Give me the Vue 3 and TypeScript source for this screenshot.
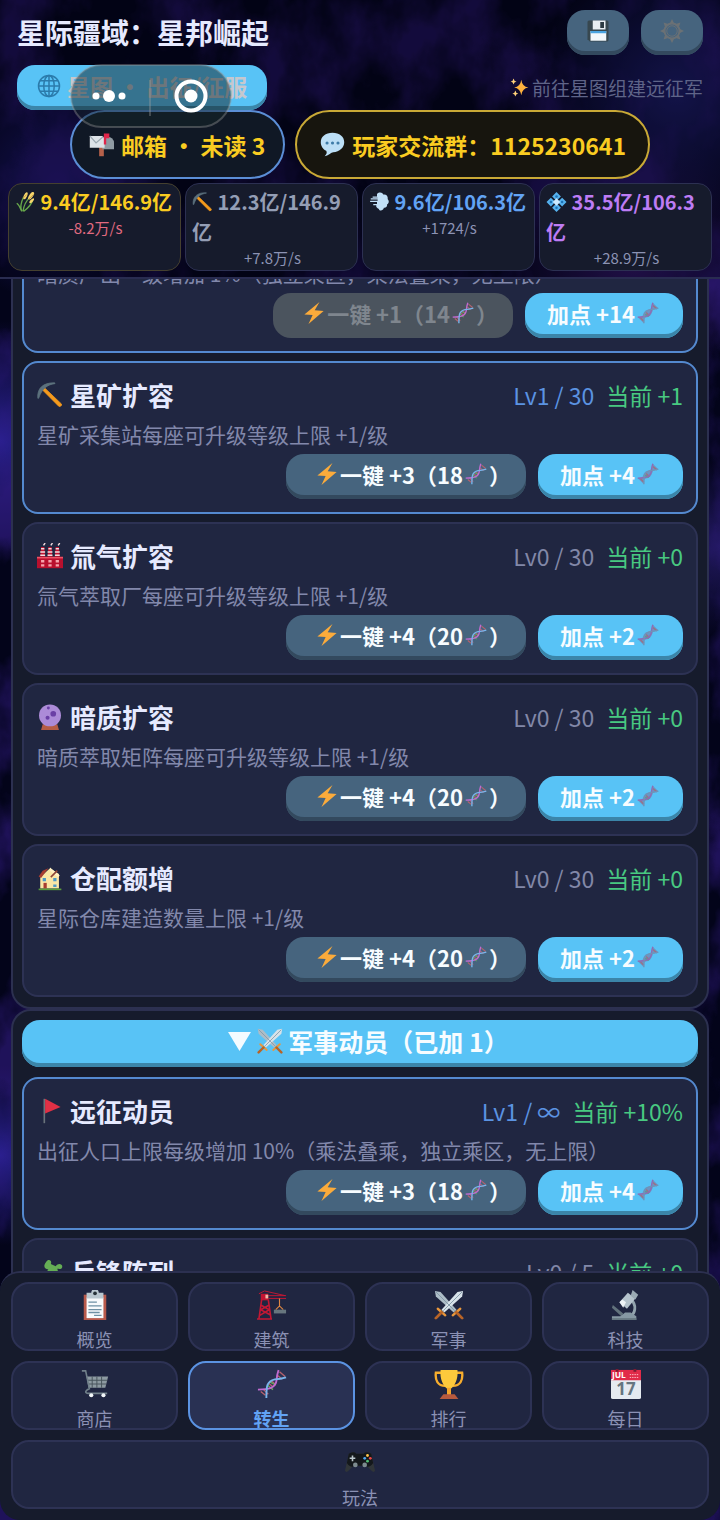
<script setup lang="ts">
import { onMounted, ref } from 'vue'

interface Talent {
  icon: string
  name: string
  level: string
  cap: string
  current: string
  desc: string
  bulk: string
  bulkCost: string
  single: string
  active?: boolean
  locked?: boolean
}

const stats = [
  { icon: 'wheat', value: '9.4亿/146.9亿', rate: '-8.2万/s', tone: 'gold' },
  { icon: 'pick', value: '12.3亿/146.9亿', rate: '+7.8万/s', tone: 'grey' },
  { icon: 'wind', value: '9.6亿/106.3亿', rate: '+1724/s', tone: 'blue' },
  { icon: 'diamond', value: '35.5亿/106.3亿', rate: '+28.9万/s', tone: 'violet' },
]

const resources: Talent[] = [
  { icon: 'diamond', name: '暗质增产', level: 'Lv1', cap: '∞', current: '+1%', desc: '暗质产出一级增加 1%（独立乘区，乘法叠乘，无上限）', bulk: '+1', bulkCost: '14', single: '+14', active: true, locked: true },
  { icon: 'pick', name: '星矿扩容', level: 'Lv1', cap: '30', current: '+1', desc: '星矿采集站每座可升级等级上限 +1/级', bulk: '+3', bulkCost: '18', single: '+4', active: true },
  { icon: 'factory', name: '氚气扩容', level: 'Lv0', cap: '30', current: '+0', desc: '氚气萃取厂每座可升级等级上限 +1/级', bulk: '+4', bulkCost: '20', single: '+2' },
  { icon: 'orb', name: '暗质扩容', level: 'Lv0', cap: '30', current: '+0', desc: '暗质萃取矩阵每座可升级等级上限 +1/级', bulk: '+4', bulkCost: '20', single: '+2' },
  { icon: 'house', name: '仓配额增', level: 'Lv0', cap: '30', current: '+0', desc: '星际仓库建造数量上限 +1/级', bulk: '+4', bulkCost: '20', single: '+2' },
]

const military: Talent[] = [
  { icon: 'flag', name: '远征动员', level: 'Lv1', cap: '∞', current: '+10%', desc: '出征人口上限每级增加 10%（乘法叠乘，独立乘区，无上限）', bulk: '+3', bulkCost: '18', single: '+4', active: true },
  { icon: 'puzzle', name: '兵锋阵列', level: 'Lv0', cap: '5', current: '+0', desc: '出征队列数量上限 +1/级', bulk: '+4', bulkCost: '20', single: '+2' },
]

const groups = [
  { id: 'resource', title: '', talents: resources },
  { id: 'military', title: '军事动员（已加 1）', talents: military },
]

const tabs = [
  { icon: 'clipboard', label: '概览' },
  { icon: 'crane', label: '建筑' },
  { icon: 'swords', label: '军事' },
  { icon: 'microscope', label: '科技' },
  { icon: 'cart', label: '商店' },
  { icon: 'dna', label: '转生' },
  { icon: 'trophy', label: '排行' },
  { icon: 'calendar', label: '每日' },
  { icon: 'gamepad', label: '玩法' },
]

const activeTab = ref('转生')
const list = ref<HTMLElement | null>(null)

onMounted(() => {
  const box = list.value
  const card = box?.querySelectorAll<HTMLElement>('.talent')[1]
  if (box && card) {
    box.scrollTop += card.getBoundingClientRect().top - box.getBoundingClientRect().top - 82
  }
})
</script>

<template>
  <div class="app">
    <svg class="sprites" aria-hidden="true">
      <symbol id="i-disk" viewBox="0 0 32 32">
        <path d="M4 2h24a2 2 0 0 1 2 2v24a2 2 0 0 1-2 2H5l-3-3V4a2 2 0 0 1 2-2z" fill="#37474f" />
        <path d="M9 2h17v12H9z" fill="#e8eef2" /><path d="M19 4h5v8h-5z" fill="#2c3a42" />
        <path d="M6 16h21v13H6z" fill="#f2f7fb" /><path d="M6 16h21v3H6z" fill="#4aa3e0" />
      </symbol>
      <symbol id="i-gear" viewBox="0 0 32 32">
        <g fill="none" stroke="#6b7175" stroke-width="2.6">
          <circle cx="16" cy="16" r="10" /><circle cx="16" cy="16" r="7" stroke-width="1.2" />
        </g>
        <path d="m16 0 3 6h-6zM16 32l3-6h-6zM0 16l6-3v6zM32 16l-6-3v6zM4.700 4.700l6.300 2.100-4.200 4.200zM27.300 4.700l-6.300 2.100 4.200 4.200zM4.700 27.300l6.300-2.100-4.200-4.200zM27.300 27.300l-6.300-2.100 4.200-4.200z" fill="#6b7175" />
      </symbol>
      <symbol id="i-globe" viewBox="0 0 32 32">
        <g fill="none" stroke="#2b7bab" stroke-width="2">
          <circle cx="16" cy="16" r="14" /><ellipse cx="16" cy="16" rx="7" ry="14" />
          <path d="M16 2v28M2 16h28M4 9h24M4 23h24" />
        </g>
      </symbol>
      <symbol id="i-sparkle" viewBox="0 0 32 32">
        <path d="M19 3q1.500 11.500 12 13q-10.500 1.500-12 13q-1.500-11.500-12-13q10.500-1.500 12-13z" fill="#fdb13e" />
        <path d="M6 1q.6 4.400 5 5q-4.400.6-5 5q-.6-4.400-5-5q4.400-.6 5-5zM9 21q.6 4.400 5 5q-4.400.6-5 5q-.6-4.400-5-5q4.400-.6 5-5z" fill="#ffd27a" />
      </symbol>
      <symbol id="i-mail" viewBox="0 0 32 32">
        <path d="M13 18h6v13h-6z" fill="#b5604a" />
        <path d="M18 6h6a8 8 0 0 1 8 8v8H17z" fill="#8f9ba3" />
        <path d="M1 5h16l3 4v11H1z" fill="#dde3e8" /><path d="m1 5 8 9 9-8" fill="none" stroke="#9ba8b0" stroke-width="1.500" />
        <path d="M19 2h7v6h-4v8h-3z" fill="#e0254a" />
      </symbol>
      <symbol id="i-chat" viewBox="0 0 32 32">
        <path d="M16 1c9 0 15 5 15 12s-6 12-14 13c-3 0-5 4-11 5 3-3 3-5 2-7-4-2-7-6-7-11C1 6 7 1 16 1z" fill="#bcdff6" />
        <g fill="#3e7ca8"><circle cx="9" cy="14" r="2" /><circle cx="16" cy="14" r="2" /><circle cx="23" cy="14" r="2" /></g>
      </symbol>
      <symbol id="i-wheat" viewBox="0 0 32 32">
        <g fill="none" stroke="#67a84b" stroke-width="2.200"><path d="M12 31C13 22 16 15 24 7M10 31C7 24 9 16 13 8M13 31C18 27 25 22 27 14M9 29C7 24 5 20 2 18" /></g>
        <g fill="#f6d56c"><ellipse cx="16" cy="6" rx="2.500" ry="6" transform="rotate(25 16 6)" /><ellipse cx="25" cy="6" rx="3" ry="7" transform="rotate(35 25 6)" /><ellipse cx="26" cy="14" rx="2" ry="5" transform="rotate(45 26 14)" /></g>
        <path d="m12 10 6-6M21 12l8-8" stroke="#a8842a" />
      </symbol>
      <symbol id="i-pick" viewBox="0 0 32 32">
        <path d="m8 6 22 21q1 3-3 3L6 9z" fill="#f59a1c" stroke="#f59a1c" />
        <path d="M1 20C0 8 7 1 21 1q2 0 1 1C13 3 6 8 2 20z" fill="#5c717d" stroke="#5c717d" />
      </symbol>
      <symbol id="i-wind" viewBox="0 0 32 32">
        <path d="M12 3c4-4 9-2 10 1 5-1 8 3 7 7 3 3 2 8-1 9 1 4-3 6-5 5-1 5-7 6-8 2-4-1-5-4-4-6H6v-2h6v-3H1v-2h12v-2H2v-2h11V9H5V7h7z" fill="#c2e0f8" />
      </symbol>
      <symbol id="i-diamond" viewBox="0 0 32 32">
        <g fill="#55b1ee"><path d="m16 0 7 7-7 7-7-7zM16 18l7 7-7 7-7-7zM7 9l7 7-7 7-7-7zM25 9l7 7-7 7-7-7z" /></g>
        <path d="m16 10 6 6-6 6-6-6z" fill="#cbeaff" />
        <g fill="#1d72b4"><circle cx="16" cy="7" r="2" /><circle cx="16" cy="25" r="2" /><circle cx="7" cy="16" r="2" /><circle cx="25" cy="16" r="2" /></g>
      </symbol>
      <symbol id="i-bolt" viewBox="0 0 32 32"><path d="M24 0 2 18l12 1L8 32 30 13l-13-1z" fill="#fbab3b" /></symbol>
      <symbol id="i-dna" viewBox="0 0 32 32">
        <g fill="none" stroke-width="1.500">
          <path d="m4 24 5 4M7 22l5 5M12 15l5 4M15 12l5 5M22 7l5 4M24 3l6 5" stroke="#b5616d" />
          <path d="m11 17 6 5M14 14l6 3" stroke="#63a95b" />
          <path d="M1 22C12 22 20 21 21 11c0-4 1-7 2-10" stroke="#c06bd0" stroke-width="2" />
          <path d="M10 31c0-12 0-18 9-20 5 0 9-1 12-2" stroke="#79b5ec" stroke-width="2" />
        </g>
      </symbol>
      <symbol id="i-dna-soft" viewBox="0 0 32 32">
        <path d="m1 22 9 9C9 23 12 22 15 22 22 21 22 12 24 11L31 9 23 1C22 6 22 10 17 11 10 12 9 18 8 21z" fill="#7187b3" opacity=".75" />
        <g fill="none" stroke-width="2">
          <path d="m5 23 5 5M13 15l5 5M23 5l6 5" stroke="#9b7186" /><path d="m12 18 5 3" stroke="#5d9c83" />
          <path d="M1 22C12 22 20 21 21 11c0-4 1-7 2-10" stroke="#8f6bb5" /><path d="M10 31c0-12 0-18 9-20 5 0 9-1 12-2" stroke="#6f93b8" />
        </g>
      </symbol>
      <symbol id="i-factory" viewBox="0 0 32 32">
        <path d="M0 17h32v14H0z" fill="#b8102e" /><path d="M0 17h32v2H0z" fill="#ee5265" />
        <path d="M5 5h4l1 12H4zM14 5h4l1 12h-6zM23 5h4l1 12h-6z" fill="#c31432" />
        <path d="M5 7h4M4 11h6M4 15h6M14 7h4M13 11h6M13 15h6M23 7h4M22 11h6M22 15h6M8 3l2-3M17 3l2-3M26 3l2-3" stroke="#f3dde0" stroke-width="1.700" />
        <path d="M5 21h4v3H5zM14 21h4v3h-4zM23 21h4v3h-4zM5 26h4v3H5zM14 26h4v3h-4zM23 26h4v3h-4z" fill="#f5a3ac" />
      </symbol>
      <symbol id="i-orb" viewBox="0 0 32 32">
        <path d="M7 25h18l2 7H5z" fill="#b65c45" /><circle cx="16" cy="14" r="13.500" fill="#ac8bd8" />
        <g fill="#6a3fa5"><circle cx="20" cy="12" r="3.500" /><circle cx="13" cy="17" r="2.500" /><circle cx="14" cy="5" r="1.800" /></g>
      </symbol>
      <symbol id="i-house" viewBox="0 0 32 32">
        <path d="M4 15 16 4l11 7v18H4z" fill="#fae6a6" /><path d="M2 14 7 7l7-3-9 12z" fill="#a73d31" />
        <path d="m16 3 12 10-2 2-10-8z" fill="#fff1c4" /><path d="m17 15 8-8" stroke="#8e4437" stroke-width="2" />
        <path d="M7 16h4v4H7zM20 16h4v4h-4zM20 24h4v3h-4z" fill="#4f99c4" /><path d="M8 22h4v7H8z" fill="#a73d31" /><path d="M2 29h28v2H2z" fill="#5c9e3f" />
      </symbol>
      <symbol id="i-flag" viewBox="0 0 32 32"><path d="M8 1h2v30H8z" fill="#69737b" /><path d="M10 1 29 11 10 19z" fill="#e13045" /></symbol>
      <symbol id="i-puzzle" viewBox="0 0 32 32"><path d="M11 4c3-5 8-2 6 2l6 3c3-5 9-3 8 1-1 3-4 2-6 2l2 8c-5 0-6 5-2 6l-5 5H4l4-8c-6 2-9-2-6-5 2-3 6-1 7 1l5-6c-6-1-6-5-3-9z" fill="#65ae55" /></symbol>
      <symbol id="i-swords" viewBox="0 0 32 32">
        <path d="m1 1 6 1 17 19-3 3L2 7z" fill="#adbdc7" /><path d="m31 1-6 1L8 21l3 3L30 7z" fill="#d7e2e9" />
        <path d="m2 2 20 20M30 2 10 22" stroke="#8298a6" />
        <path d="m4 20 8 7M28 20l-8 7" stroke="#e9973c" stroke-width="2.500" stroke-linecap="round" />
        <path d="m8 24-6 6M24 24l6 6" stroke="#b86427" stroke-width="3" stroke-linecap="round" />
      </symbol>
      <symbol id="i-clipboard" viewBox="0 0 32 32">
        <path d="M4 5h24v27H4z" fill="#b7594b" /><path d="M7 8h18v22H7z" fill="#f7fafc" />
        <path d="M12 3a4 4 0 0 1 8 0h5v6H7V3z" fill="#b9c7cf" /><circle cx="16" cy="3.500" r="2" fill="#263238" />
        <path d="M9 13h9M9 17h14M9 21h14M9 24h12M15 27h8" stroke="#6d90a4" stroke-width="1.400" />
      </symbol>
      <symbol id="i-crane" viewBox="0 0 32 32">
        <g fill="none" stroke="#c31834" stroke-width="1.700">
          <path d="M5 10 2 31M12 10l3 21M0 31h16M4 16l9 5-10 6M13 16l-9 5 11 6" />
          <path d="M12 6h19M12 9h19M2 4l6-3 22 5" stroke-width="1" />
        </g>
        <path d="M4 4h8v7H4z" fill="#c31432" /><path d="M9 5h3v4H9z" fill="#f1b9a7" />
        <path d="M24 9v9M20 21l4-4 4 4" fill="none" stroke="#df8742" stroke-width="1.200" /><path d="M18 21h13v4H18z" fill="#67767e" />
      </symbol>
      <symbol id="i-microscope" viewBox="0 0 32 32">
        <path d="M21 10c7 6 5 15-1 19" fill="none" stroke="#93a4ae" stroke-width="3" />
        <path d="m18 3 8 6-9 11-8-7z" fill="#b5c3cc" /><path d="m12 10 4 3-3 6-4-6z" fill="#eef3f6" />
        <path d="m23 0 6 5-3 5-5-4z" fill="#9babb5" /><path d="m2 16 11 9-2 3L1 19z" fill="#62727c" />
        <path d="M1 28h9l5-4h6l6 4v4H1z" fill="#8698a3" /><path d="M1 30h26v2H1z" fill="#667781" />
      </symbol>
      <symbol id="i-cart" viewBox="0 0 32 32">
        <path d="M7 8h23l-3 12H9z" fill="#8d9aa1" /><path d="M8 12h21M9 16h19M13 8v12M18 8v12M23 8v12" stroke="#46525a" />
        <path d="M2 2h4l4 19c-5 2-5 5-1 5h20" fill="none" stroke="#71808a" stroke-width="1.700" />
        <circle cx="12" cy="28" r="2.200" fill="#f2f6f8" /><circle cx="25" cy="28" r="2.200" fill="#f2f6f8" />
      </symbol>
      <symbol id="i-trophy" viewBox="0 0 32 32">
        <path d="M8 4H2c-1 8 2 14 10 14M24 4h6c1 8-2 14-10 14" fill="none" stroke="#f7ad2d" stroke-width="2.500" />
        <path d="M7 1h18c1 10-3 17-7 20v6h-4v-6C10 18 6 11 7 1z" fill="#fdc93c" /><path d="M14 20h4v8h-4z" fill="#f4a42b" /><path d="M10 27h12l4 5H6z" fill="#b75a3e" />
      </symbol>
      <symbol id="i-calendar" viewBox="0 0 32 32">
        <rect x="0" y="1" width="32" height="31" rx="2" fill="#e5eaf0" /><path d="M0 1h32v11H0z" fill="#e12b49" />
        <path d="M5 0h3v3H5zM24 0h3v3h-3z" fill="#7b1c32" />
        <path d="M20 6h10M20 9h10" stroke="#ffc4cc" stroke-dasharray="1.500 1" />
        <text x="1" y="10" class="cal-month">JUL</text><text x="16" y="28" text-anchor="middle" class="cal-day">17</text>
      </symbol>
      <symbol id="i-gamepad" viewBox="0 0 32 32">
        <path d="M4 6q6-3 8 0h8q2-3 8 0l4 18q-1 3-4 0l-5-5H9l-5 5q-3 3-4 0z" fill="#303538" />
        <path d="M4 6q6-3 8 0h8q2-3 8 0l2 10q-4 6-9 3H11q-5 3-9-3z" fill="#14181b" />
        <path d="M8 8v6M5 11h6" stroke="#bbc6cb" stroke-width="1.700" /><circle cx="11" cy="18" r="2.500" fill="#7d8b8f" /><circle cx="21" cy="18" r="2.500" fill="#7d8b8f" />
        <circle cx="24" cy="8" r="1.500" fill="#ffc44c" /><circle cx="21" cy="11" r="1.500" fill="#4da7f4" /><circle cx="27" cy="11" r="1.500" fill="#e84646" /><circle cx="24" cy="14" r="1.500" fill="#51ba74" />
      </symbol>
    </svg>

    <svg class="nebula" aria-hidden="true">
      <filter id="clouds" x="0" y="0" width="100%" height="100%" color-interpolation-filters="sRGB">
        <feTurbulence type="fractalNoise" baseFrequency="0.014 0.009" numOctaves="5" seed="11" />
        <feColorMatrix values="0 0 0 0 0.2  0 0 0 0 0.11  0 0 0 0 0.52  3.2 0.8 0 0 -1.75" />
      </filter>
      <rect width="100%" height="100%" filter="url(#clouds)" />
    </svg>

    <header class="top">
      <div class="bar">
        <h1>星际疆域：星邦崛起</h1>
        <div class="tools">
          <button class="btn dim tool" type="button" aria-label="保存"><svg><use href="#i-disk" /></svg></button>
          <button class="btn dim tool" type="button" aria-label="设置"><svg><use href="#i-gear" /></svg></button>
        </div>
      </div>
      <div class="bar second">
        <button class="btn starmap" type="button"><svg><use href="#i-globe" /></svg>星图 · 出征/征服</button>
        <p class="hint"><svg><use href="#i-sparkle" /></svg>前往星图组建远征军</p>
      </div>
      <div class="pills">
        <button class="pill mail" type="button"><svg><use href="#i-mail" /></svg>邮箱 · 未读 3</button>
        <button class="pill group" type="button"><svg><use href="#i-chat" /></svg>玩家交流群：1125230641</button>
      </div>
      <ul class="stats">
        <li v-for="s in stats" :key="s.icon" :class="s.tone">
          <div class="amount"><svg><use :href="'#i-' + s.icon" /></svg>{{ ' ' + s.value }}</div>
          <div class="rate">{{ s.rate }}</div>
        </li>
      </ul>
      <svg class="capsule" viewBox="0 0 162 64" aria-hidden="true">
        <rect x="1" y="1" width="160" height="62" rx="31" fill="rgba(20,35,40,.5)" stroke="rgba(150,150,150,.4)" stroke-width="2" />
        <circle cx="26" cy="32" r="3.500" fill="#fff" /><circle cx="39" cy="32" r="6" fill="#fff" /><circle cx="52" cy="32" r="3.500" fill="#fff" />
        <path d="M80 16v36" stroke="rgba(160,160,160,.35)" stroke-width="2" />
        <circle cx="121" cy="32" r="14.500" fill="none" stroke="#fff" stroke-width="4" /><circle cx="121" cy="32" r="6.500" fill="#fff" />
      </svg>
    </header>

    <main ref="list" class="list">
      <section v-for="g in groups" :key="g.id" class="panel">
        <button v-if="g.title" class="btn fold" type="button">
          <svg class="tri" viewBox="0 0 24 22"><path d="M0 1h24L12 21z" fill="#f4fbff" /></svg>
          <svg><use href="#i-swords" /></svg>{{ g.title }}
        </button>
        <article v-for="t in g.talents" :key="t.name" class="talent" :class="{ active: t.active }">
          <div class="head">
            <h2><svg><use :href="'#i-' + t.icon" /></svg>{{ t.name }}</h2>
            <p><span class="level">{{ t.level }} / {{ t.cap }}</span><span class="now">当前 {{ t.current }}</span></p>
          </div>
          <p class="desc">{{ t.desc }}</p>
          <div class="actions">
            <button class="btn dim bulk" type="button" :disabled="t.locked"><svg class="bolt"><use href="#i-bolt" /></svg>一键 {{ t.bulk }}（{{ t.bulkCost }}<svg><use href="#i-dna" /></svg>）</button>
            <button class="btn" type="button">加点 {{ t.single }}<svg><use href="#i-dna-soft" /></svg></button>
          </div>
        </article>
      </section>
    </main>

    <nav class="tabs">
      <button v-for="t in tabs" :key="t.label" type="button" :class="{ on: activeTab === t.label }" @click="activeTab = t.label">
        <svg><use :href="'#i-' + t.icon" /></svg>
        <span>{{ t.label }}</span>
      </button>
    </nav>
  </div>
</template>

<style>
body {
  margin: 0;
  background: #03040f;
}
</style>

<style scoped>
* {
  box-sizing: border-box;
}
.app {
  position: relative;
  isolation: isolate;
  display: flex;
  flex-direction: column;
  height: 100vh;
  overflow: hidden;
  font-family: "Noto Sans CJK SC", "Noto Sans", sans-serif;
  color: #e6eaff;
  background:
    radial-gradient(circle at 94% 6%, #1f1f70 0, transparent 140px),
    radial-gradient(circle at 8% 12%, #1f1a78 0, transparent 120px),
    radial-gradient(circle at 88% 17%, #371a70 0, transparent 130px),
    radial-gradient(circle at 0 29%, #2a2090 0, transparent 120px),
    radial-gradient(circle at 100% 36%, #20185c 0, transparent 90px),
    radial-gradient(circle at 0 76%, #2a2090 0, transparent 90px),
    #03041a;
}
.sprites {
  position: absolute;
  width: 0;
  height: 0;
}
.nebula {
  position: absolute;
  inset: 0;
  z-index: -1;
  width: 100%;
  height: 100%;
  opacity: 0.6;
}
.cal-month {
  font: 700 9px "Noto Sans", sans-serif;
  fill: #fff;
}
.cal-day {
  font: 700 18px "Noto Sans", sans-serif;
  fill: #66757f;
}
h1, h2, p, ul {
  margin: 0;
  padding: 0;
}
button {
  font-family: inherit;
  cursor: pointer;
}
.top {
  position: relative;
  padding-top: 10px;
  border-bottom: 2px solid #292c50;
  background: rgba(2, 3, 16, 0.4);
}
.bar {
  display: flex;
  align-items: center;
  justify-content: space-between;
  padding: 0 17px;
}
.second {
  margin-top: 10px;
}
h1 {
  font-size: 28px;
  line-height: 45px;
  font-weight: 700;
}
.tools {
  display: flex;
  gap: 12px;
}
.btn {
  display: inline-flex;
  align-items: center;
  justify-content: center;
  height: 45px;
  padding: 0 22px 5px;
  border: 0;
  border-radius: 18px;
  background: #58c3f6;
  box-shadow: inset 0 -4px #3b85a9;
  color: #f7fcff;
  font-size: 22px;
  font-weight: 700;
  white-space: nowrap;
}
.btn svg {
  width: 22px;
  height: 22px;
  margin: 0 2px;
}
.btn.dim {
  background: #46647e;
  box-shadow: inset 0 -4px #33495e;
}
.btn.bulk {
  padding: 0 15px 5px 28px;
}
.btn:disabled {
  background: #4b545e;
  box-shadow: none;
  color: #7f868e;
}
.btn.tool {
  width: 62px;
  padding: 0 0 3px;
}
.tool svg {
  width: 24px;
  height: 24px;
}
.btn.starmap {
  padding: 0 20px 3px;
  color: #c6c8ce;
  font-size: 23px;
}
.btn.starmap svg {
  width: 24px;
  height: 24px;
  margin: 0 6px 0 0;
}
.hint {
  display: flex;
  align-items: center;
  gap: 3px;
  font-size: 19px;
  color: #5f6488;
}
.hint svg {
  width: 19px;
  height: 19px;
}
.pills {
  display: flex;
  justify-content: center;
  gap: 10px;
}
.pill {
  display: flex;
  align-items: center;
  height: 69px;
  padding: 0 18px 0 17px;
  border: 2px solid #5b8ed6;
  border-radius: 35px;
  background: #101825;
  color: #facc21;
  font-size: 23px;
  font-weight: 700;
  white-space: nowrap;
}
.pill svg {
  width: 25px;
  height: 25px;
  margin-right: 7px;
}
.pill.group {
  padding: 0 22px 0 23px;
  border-color: #c9a936;
  background: #17150e;
}
.stats {
  display: grid;
  grid-template-columns: repeat(4, 1fr);
  gap: 4px;
  margin: 4px 8px 6px;
  list-style: none;
}
.stats li {
  padding: 3px 4px 1px 6px;
  border: 1px solid #2c3052;
  border-radius: 14px;
  background: #161b2c;
}
.amount {
  font-size: 20px;
  line-height: 30px;
  font-weight: 700;
}
.amount svg {
  width: 21px;
  height: 20px;
  vertical-align: -2px;
}
.rate {
  font-size: 15px;
  line-height: 22px;
  text-align: center;
  color: #8c93b4;
}
.stats .gold {
  border-color: #45402f;
  color: #facc21;
}
.gold .rate {
  color: #e06a80;
}
.grey {
  color: #949eb5;
}
.blue {
  color: #62a3f4;
}
.violet {
  color: #bd7cf5;
}
.capsule {
  position: absolute;
  left: 70px;
  top: 64px;
  width: 162px;
  height: 64px;
  pointer-events: none;
}
.list {
  flex: 1;
  min-height: 0;
  margin-bottom: -20px;
  padding: 0 11px 30px;
  overflow-y: auto;
  scrollbar-width: none;
}
.panel {
  display: flex;
  flex-direction: column;
  gap: 8px;
  padding: 9px 9px 10px;
  border: 2px solid #2c3050;
  border-radius: 20px;
  background: #161b2c;
}
.btn.fold {
  height: 47px;
  margin-bottom: 2px;
  padding: 0 22px 5px 38px;
  font-size: 25px;
}
.fold svg {
  width: 26px;
  height: 26px;
  margin: 0 5px;
}
.fold .tri {
  width: 23px;
  height: 21px;
  margin: 0 1px;
}
.talent {
  padding: 13px;
  border: 2px solid #2d3254;
  border-radius: 16px;
  background: #202641;
}
.talent.active {
  border-color: #5489cf;
}
.head {
  display: flex;
  align-items: center;
  justify-content: space-between;
  height: 37px;
}
h2 {
  display: flex;
  align-items: center;
  gap: 7px;
  font-size: 26px;
  font-weight: 700;
}
h2 svg {
  width: 26px;
  height: 26px;
}
.head p {
  display: flex;
  gap: 12px;
  font-size: 23px;
}
.level {
  color: #8288a8;
}
.active .level {
  color: #5b93e2;
}
.now {
  color: #48c981;
}
.desc {
  margin-top: 4px;
  font-size: 21px;
  line-height: 34px;
  color: #8288ab;
}
.actions {
  display: flex;
  justify-content: flex-end;
  gap: 12px;
  margin-top: 3px;
}
.tabs {
  position: relative;
  display: grid;
  grid-template-columns: repeat(4, 1fr);
  gap: 10px;
  padding: 9px 11px 11px;
  border-top: 2px solid #2c3050;
  border-radius: 20px;
  background: #161b2c;
}
.tabs button {
  display: flex;
  flex-direction: column;
  align-items: center;
  padding: 6px 0 0;
  border: 2px solid #2d3254;
  border-radius: 18px;
  background: #202641;
  color: #8b91b4;
  font-size: 18px;
}
.tabs button:last-child {
  grid-column: 1 / -1;
}
.tabs svg {
  width: 30px;
  height: 30px;
  margin-bottom: 9px;
}
.tabs span {
  line-height: 20px;
}
.tabs .on {
  border-color: #5b93e2;
  background: #293153;
  color: #62a3f4;
  font-weight: 700;
}
</style>
